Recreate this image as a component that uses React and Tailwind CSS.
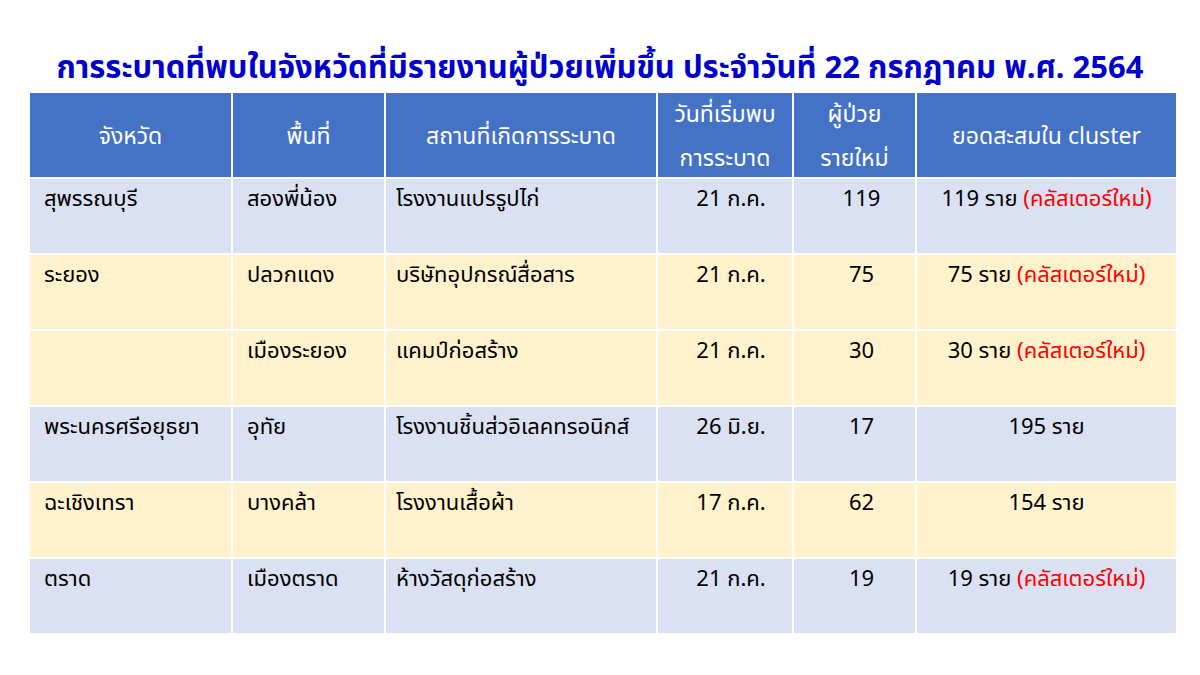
import React from "react";

const rows = [
  { bg: "bg-[#d9e1f2]", p: "สุพรรณบุรี", a: "สองพี่น้อง", s: "โรงงานแปรรูปไก่", d: "21 ก.ค.", n: "119", t: "119 ราย", nw: true },
  { bg: "bg-[#fff2cc]", p: "ระยอง", a: "ปลวกแดง", s: "บริษัทอุปกรณ์สื่อสาร", d: "21 ก.ค.", n: "75", t: "75 ราย", nw: true },
  { bg: "bg-[#fff2cc]", p: "", a: "เมืองระยอง", s: "แคมป์ก่อสร้าง", d: "21 ก.ค.", n: "30", t: "30 ราย", nw: true },
  { bg: "bg-[#d9e1f2]", p: "พระนครศรีอยุธยา", a: "อุทัย", s: "โรงงานชิ้นส่วอิเลคทรอนิกส์", d: "26 มิ.ย.", n: "17", t: "195 ราย", nw: false },
  { bg: "bg-[#fff2cc]", p: "ฉะเชิงเทรา", a: "บางคล้า", s: "โรงงานเสื้อผ้า", d: "17 ก.ค.", n: "62", t: "154 ราย", nw: false },
  { bg: "bg-[#d9e1f2]", p: "ตราด", a: "เมืองตราด", s: "ห้างวัสดุก่อสร้าง", d: "21 ก.ค.", n: "19", t: "19 ราย", nw: true },
];

export default function App() {
  return (
    <div
      className="w-[1200px] h-[675px] bg-white overflow-hidden"
      style={{ fontFamily: '"Noto Sans", "Noto Sans Thai", Tahoma, sans-serif' }}
    >
      <div className="h-[93px] flex items-center justify-center pt-[40px]">
        <h1 className="text-[31px] font-bold text-[#0000cc] leading-none whitespace-nowrap">
          การระบาดที่พบในจังหวัดที่มีรายงานผู้ป่วยเพิ่มขึ้น ประจำวันที่ 22 กรกฎาคม พ.ศ. 2564
        </h1>
      </div>
      <div className="ml-[30px] w-[1146px] grid grid-cols-[201px_151px_270px_134px_121px_259px] grid-rows-[84px_repeat(6,74px)] gap-[2px] bg-white text-[22px] text-black">
        <div className="bg-[#4472c4] text-white text-[23px] flex items-center justify-center">จังหวัด</div>
        <div className="bg-[#4472c4] text-white text-[23px] flex items-center justify-center">พื้นที่</div>
        <div className="bg-[#4472c4] text-white text-[23px] flex items-center justify-center">สถานที่เกิดการระบาด</div>
        <div className="bg-[#4472c4] text-white text-[23px] flex flex-col items-center justify-center leading-[44px] whitespace-nowrap">
          <span>วันที่เริ่มพบ</span>
          <span>การระบาด</span>
        </div>
        <div className="bg-[#4472c4] text-white text-[23px] flex flex-col items-center justify-center leading-[44px]">
          <span>ผู้ป่วย</span>
          <span>รายใหม่</span>
        </div>
        <div className="bg-[#4472c4] text-white text-[23px] flex items-center justify-center">ยอดสะสมใน cluster</div>
        {rows.map((r, i) => (
          <React.Fragment key={i}>
            <div className={`${r.bg} pl-[14px] pt-[2px] whitespace-nowrap`}>{r.p}</div>
            <div className={`${r.bg} pl-[14px] pt-[2px] whitespace-nowrap`}>{r.a}</div>
            <div className={`${r.bg} pl-[10px] pt-[2px] whitespace-nowrap`}>{r.s}</div>
            <div className={`${r.bg} pt-[2px] text-center pl-[12px] whitespace-nowrap`}>{r.d}</div>
            <div className={`${r.bg} pt-[2px] text-center pl-[14px] whitespace-nowrap`}>{r.n}</div>
            <div className={`${r.bg} pt-[2px] text-center whitespace-nowrap`}>
              {r.t}
              {r.nw && <span className="text-[#ff0000]"> (คลัสเตอร์ใหม่)</span>}
            </div>
          </React.Fragment>
        ))}
      </div>
    </div>
  );
}
